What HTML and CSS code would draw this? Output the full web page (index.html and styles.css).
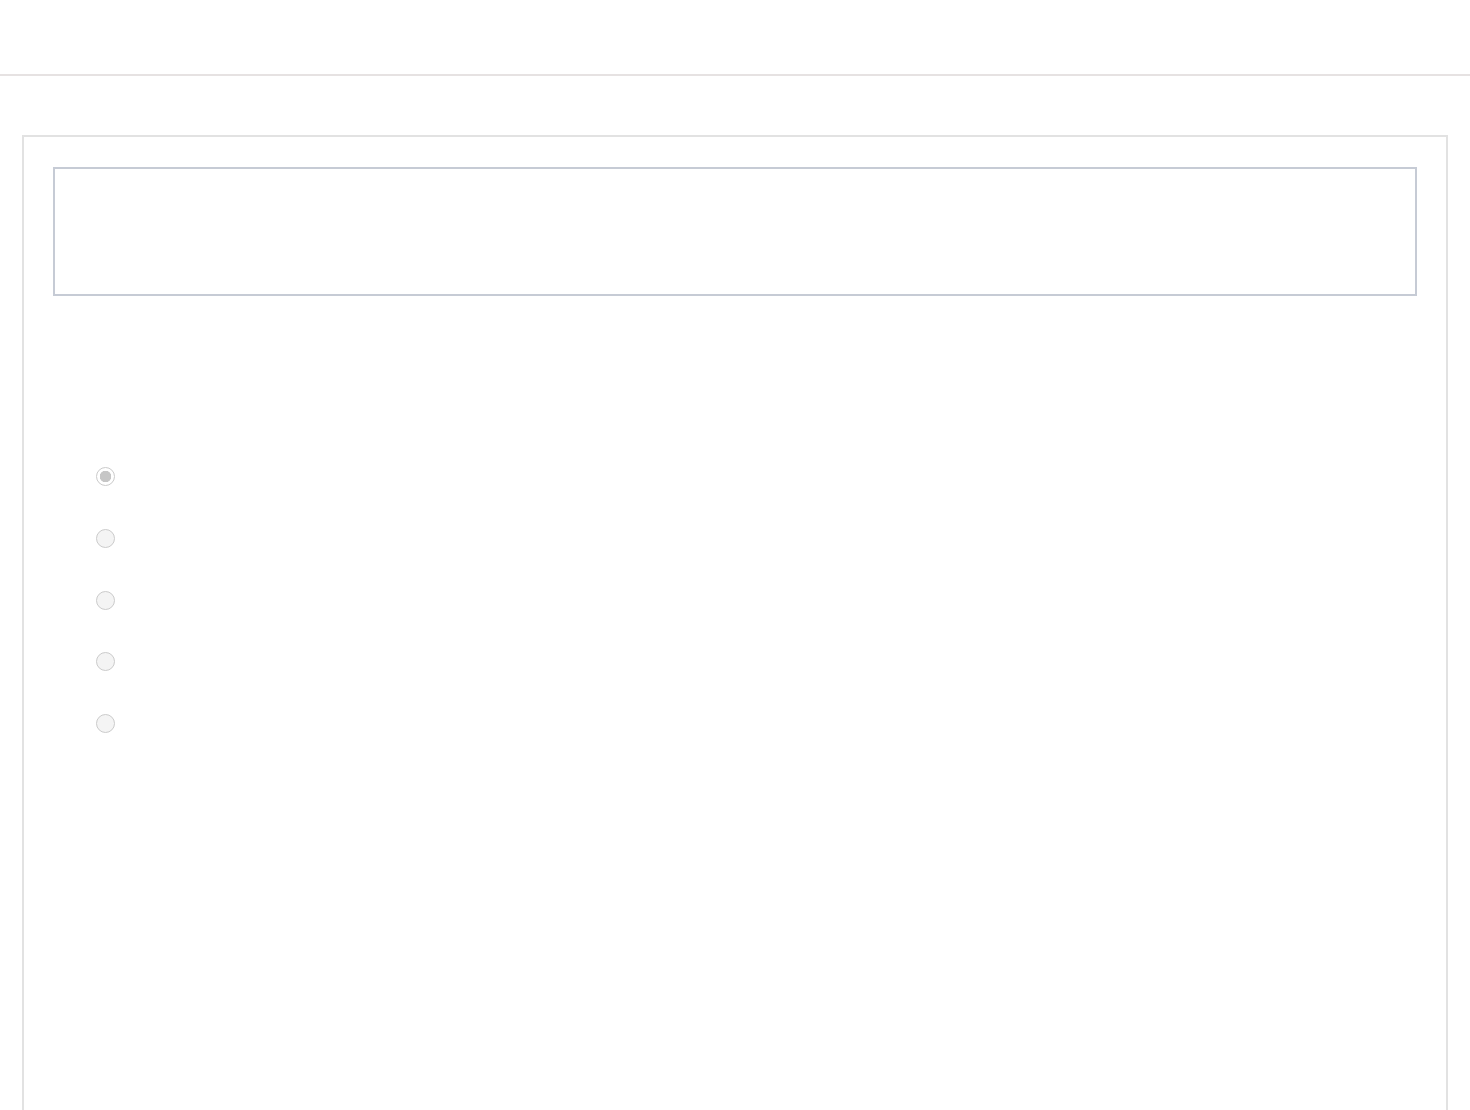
FILE: index.html
```html
<!DOCTYPE html>
<html lang="en">
<head>
    <meta charset="UTF-8">
    <meta name="viewport" content="width=device-width, initial-scale=1.0">
    <title>Question</title>
    <link rel="stylesheet" href="styles.css">
</head>
<body>
    <!-- Top bar -->
    <header class="topbar"></header>

    <main class="page">
        <section class="card">
            <!-- Question text area -->
            <div class="question-box"></div>

            <!-- Answer options -->
            <form class="options">
                <label class="option"><input type="radio" name="answer" value="a" checked disabled></label>
                <label class="option"><input type="radio" name="answer" value="b" disabled></label>
                <label class="option"><input type="radio" name="answer" value="c" disabled></label>
                <label class="option"><input type="radio" name="answer" value="d" disabled></label>
                <label class="option"><input type="radio" name="answer" value="e" disabled></label>
            </form>
        </section>
    </main>
</body>
</html>
```

FILE: styles.css
```css
body {
    font-family: "Liberation Sans", Arial, sans-serif;
    margin: 0;
    background-color: #fff;
}
.topbar {
    height: 74px;
    border-bottom: 2px solid #e6e2e2;
}
.page {
    padding: 59px 22px 0;
}
.card {
    border: 2px solid #e2e2e2;
    border-bottom: none;
    padding: 30px 29px;
    min-height: 1000px;
}
.question-box {
    height: 125px;
    border: 2px solid #c6cbd5;
}
.options {
    display: flex;
    flex-direction: column;
    gap: 42.8px;
    margin-top: 171px;
    padding-left: 43px;
}
.option {
    display: flex;
    align-items: center;
    height: 19px;
}
.option input {
    appearance: none;
    -webkit-appearance: none;
    margin: 0;
    width: 19px;
    height: 19px;
    border: 1.5px solid #cbcbcb;
    border-radius: 50%;
    background-color: #f4f4f4;
}
.option input:checked {
    background: radial-gradient(circle, #c6c6c6 0 5.5px, #fff 6px);
}
```
